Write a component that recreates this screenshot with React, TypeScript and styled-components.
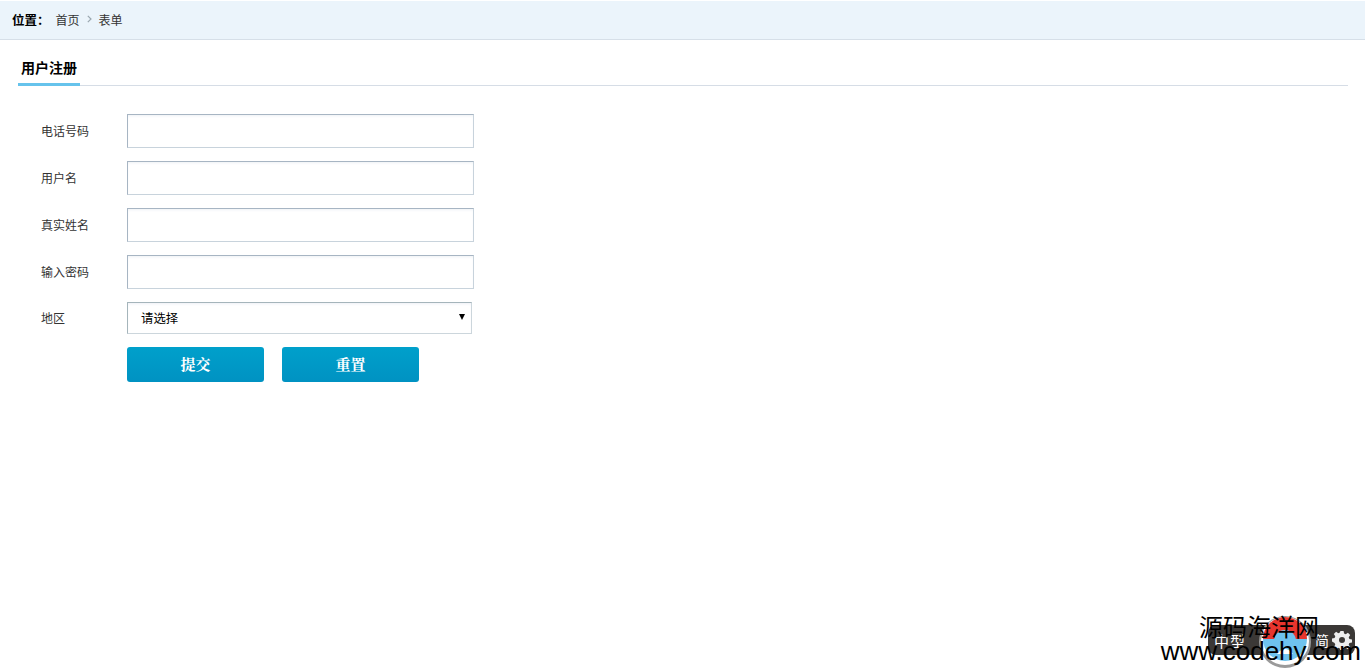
import styled, { createGlobalStyle } from "styled-components";

const cjk = `"Liberation Sans", "Noto Sans CJK SC", sans-serif`;

const GlobalStyle = createGlobalStyle`
  html, body {
    margin: 0;
    padding: 0;
    background: #fff;
    font-family: ${cjk};
    overflow: hidden;
  }
`;

const Page = styled.div`
  position: relative;
  height: 671px;
  overflow: hidden;
  box-sizing: border-box;
  padding-top: 1px;
`;

const Breadcrumb = styled.div`
  display: flex;
  align-items: center;
  height: 36px;
  padding: 0 0 2px 12px;
  background: #ebf4fb;
  border-bottom: 1px solid #d6dfe8;
  font-size: 12px;
  color: #333;
`;

const CrumbLabel = styled.span`
  font-weight: 700;
  font-size: 12.5px;
  color: #000;
  margin-right: 6px;
`;

const CrumbSep = styled.span`
  margin: 0 7px;
  display: inline-flex;
`;

const Tabs = styled.div`
  display: flex;
  margin: 10px 17px 0 18px;
  height: 36px;
  box-sizing: border-box;
  border-bottom: 1px solid #d6dde6;
`;

const Tab = styled.div`
  width: 62px;
  height: 36px;
  box-sizing: border-box;
  padding: 9px 0 0 3px;
  border-bottom: 3px solid #66c3ec;
  font-size: 14px;
  line-height: 18px;
  font-weight: 700;
  color: #000;
`;

const Form = styled.form`
  display: flex;
  flex-direction: column;
  gap: 13px;
  margin: 28px 0 0 41px;
`;

const Row = styled.div`
  display: flex;
  align-items: center;
`;

const Label = styled.label`
  width: 86px;
  font-size: 12px;
  color: #333;
  margin-bottom: 2px;
`;

const Input = styled.input`
  width: 347px;
  height: 34px;
  box-sizing: border-box;
  padding: 0 13px;
  background: #fff;
  border: 1px solid #c8d3dc;
  border-top-color: #a7b5c3;
  border-left-color: #a7b5c3;
  box-shadow: inset 0 2px 3px -1px #eef1f5;
  outline: none;
`;

const FakeSelect = styled.div`
  display: flex;
  align-items: center;
  justify-content: space-between;
  width: 345px;
  height: 32px;
  box-sizing: border-box;
  padding: 0 6px 1px 13px;
  background: #fff;
  border: 1px solid #ccd6dc;
  border-top-color: #a5b5bb;
  border-left-color: #a5b5bb;
  box-shadow: inset 0 2px 3px -1px #eef0f6;
  font-size: 12.4px;
  color: #000;
`;

const Arrow = styled.svg`
  width: 6px;
  height: 6px;
  margin-bottom: 1px;
`;

const Buttons = styled.div`
  display: flex;
  gap: 18px;
  margin-left: 86px;
`;

const Button = styled.button`
  width: 137px;
  height: 35px;
  padding: 0 0 2px;
  border: 0;
  border-radius: 3px;
  background: linear-gradient(#00a0cb, #0092c2);
  color: #fff;
  font-family: "Liberation Serif", "Noto Serif CJK SC", "Noto Sans CJK SC", serif;
  font-size: 15px;
  font-weight: 700;
`;

const Widget = styled.div`
  position: absolute;
  right: 10px;
  top: 625px;
  width: 147px;
  height: 30px;
  border-radius: 8px;
  background: #3b3836;
  color: #fff;
  display: flex;
  align-items: center;
  justify-content: space-between;
  padding: 0 3px 0 6px;
  box-sizing: border-box;
  font-size: 14px;
`;

const WidgetMode = styled.span`
  font-size: 15px;
  letter-spacing: 1px;
`;

const WidgetGroup = styled.span`
  display: flex;
  align-items: center;
  gap: 3px;
`;

const Globe = styled.svg`
  position: absolute;
  left: 1259px;
  top: 616px;
  width: 52px;
  height: 52px;
`;

const Watermark = styled.div`
  position: absolute;
  right: 4px;
  top: 613px;
  width: 210px;
  color: #000;
`;

const WatermarkTitle = styled.div`
  font-size: 24px;
  height: 24px;
  line-height: 26px;
  padding-right: 42px;
  padding-top: 2px;
  text-align: right;
`;

const WatermarkUrl = styled.div`
  font-size: 26px;
  height: 24px;
  line-height: 24px;
  white-space: nowrap;
  text-align: right;
`;

export default function App() {
  return (
    <Page>
      <GlobalStyle />
      <Breadcrumb>
        <CrumbLabel>位置：</CrumbLabel>
        <span>首页</span>
        <CrumbSep>
          <svg width="5" height="8" viewBox="0 0 5 8" fill="none" stroke="#9aa7b0" strokeWidth="1.2">
            <path d="M0.8 0.8 L4 4 L0.8 7.2" />
          </svg>
        </CrumbSep>
        <span>表单</span>
      </Breadcrumb>
      <Tabs>
        <Tab>用户注册</Tab>
      </Tabs>
      <Form onSubmit={(e) => e.preventDefault()}>
        <Row>
          <Label>电话号码</Label>
          <Input />
        </Row>
        <Row>
          <Label>用户名</Label>
          <Input />
        </Row>
        <Row>
          <Label>真实姓名</Label>
          <Input />
        </Row>
        <Row>
          <Label>输入密码</Label>
          <Input />
        </Row>
        <Row>
          <Label>地区</Label>
          <FakeSelect>
            请选择
            <Arrow viewBox="0 0 6 6">
              <path d="M0 0 H6 L3 6 Z" fill="#000" />
            </Arrow>
          </FakeSelect>
        </Row>
        <Buttons>
          <Button type="submit">提交</Button>
          <Button type="reset">重置</Button>
        </Buttons>
      </Form>
      <Widget>
        <WidgetMode>中型</WidgetMode>
        <WidgetGroup>
          <span>简</span>
          <svg width="20" height="20" viewBox="0 0 20 20">
            <path
              fill="#eee"
              fillRule="evenodd"
              d="M8.4 1h3.200l.5 2.600 1.600.7 2.200-1.500 2.300 2.300-1.500 2.200.7 1.600 2.600.5v3.200l-2.600.5-.7 1.600 1.500 2.200-2.300 2.300-2.200-1.500-1.600.7-.5 2.600H8.400l-.5-2.600-1.600-.7-2.200 1.500-2.300-2.300 1.500-2.200-.7-1.600L0 11.600V8.400l2.600-.5.7-1.600-1.500-2.200 2.300-2.300 2.200 1.500 1.600-.7zM10 7a3 3 0 1 0 0 6 3 3 0 0 0 0-6z"
            />
          </svg>
        </WidgetGroup>
      </Widget>
      <Globe viewBox="0 0 52 52">
        <circle cx="26" cy="26" r="26" fill="#9a9a9a" />
        <circle cx="26" cy="25" r="24" fill="#fff" />
        <path d="M4 23 A22 22 0 0 1 48 23 Z" fill="#e8352e" />
        <path d="M4 23 A22 22 0 0 0 48 23 Z" fill="#6fc3ee" />
        <circle cx="26" cy="25" r="11" fill="#6fc3ee" />
        <path d="M18 38 Q26 28 34 38 Z" fill="#fff" />
      </Globe>
      <Watermark>
        <WatermarkTitle>源码海洋网</WatermarkTitle>
        <WatermarkUrl>www.codehy.com</WatermarkUrl>
      </Watermark>
    </Page>
  );
}
